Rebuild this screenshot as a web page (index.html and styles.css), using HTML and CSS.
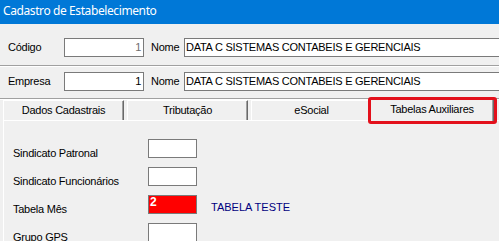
FILE: index.html
```html
<!DOCTYPE html>
<html lang="pt">
<head>
<meta charset="utf-8">
<title>Cadastro de Estabelecimento</title>
<link rel="stylesheet" href="styles.css">
</head>
<body>
<div class="window">
  <div class="titlebar">Cadastro de Estabelecimento</div>
  <div class="header">
    <div class="row">
      <span class="lbl">Código</span>
      <div class="input num disabled">1</div>
      <span class="lbl-nome">Nome</span>
      <div class="input text">DATA C SISTEMAS CONTABEIS E GERENCIAIS</div>
    </div>
    <div class="sep sep-1"></div>
    <div class="row row-2">
      <span class="lbl">Empresa</span>
      <div class="input num">1</div>
      <span class="lbl-nome">Nome</span>
      <div class="input text">DATA C SISTEMAS CONTABEIS E GERENCIAIS</div>
    </div>
    <div class="sep sep-2"></div>
  </div>
  <div class="tabs">
    <div class="tab">Dados Cadastrais</div>
    <div class="tab">Tributação</div>
    <div class="tab">eSocial</div>
    <div class="tab active">Tabelas Auxiliares</div>
    <div class="highlight"></div>
  </div>
  <div class="panel">
    <div class="field">
      <span class="flabel">Sindicato Patronal</span>
      <div class="fbox"></div>
    </div>
    <div class="field">
      <span class="flabel">Sindicato Funcionários</span>
      <div class="fbox"></div>
    </div>
    <div class="field">
      <span class="flabel">Tabela Mês</span>
      <div class="fbox red">2</div>
      <span class="fdesc">TABELA TESTE</span>
    </div>
    <div class="field">
      <span class="flabel">Grupo GPS</span>
      <div class="fbox"></div>
    </div>
  </div>
</div>
</body>
</html>
```
FILE: styles.css
```css
html, body {
  margin: 0;
  padding: 0;
  background: #f0f0f0;
  overflow: hidden;
}
body {
  font-family: "Liberation Sans", Arial, sans-serif;
  font-size: 11px;
  letter-spacing: -0.25px;
  color: #000;
}
.window {
  width: 499px;
  height: 241px;
  overflow: hidden;
  background: #f0f0f0;
}
.titlebar {
  height: 24px;
  line-height: 22px;
  background: #0078d7;
  color: #fff;
  padding-left: 3px;
  font-family: "Noto Sans", "Open Sans", sans-serif;
  font-size: 12px;
  letter-spacing: -0.4px;
}
.header {
  padding-top: 14px;
}
.row {
  display: flex;
  align-items: center;
  height: 19px;
  padding-left: 8px;
}
.row-2 {
  margin-top: 5px;
}
.lbl {
  width: 56px;
  line-height: 13px;
  flex: none;
}
.lbl-nome {
  margin-left: 7px;
  width: 33px;
  line-height: 13px;
  flex: none;
}
.input {
  box-sizing: border-box;
  height: 19px;
  border: 1px solid #7a7a7a;
  background: #fff;
  line-height: 17px;
  white-space: nowrap;
  flex: none;
}
.num {
  width: 80px;
  text-align: right;
  padding-right: 2px;
}
.disabled {
  color: #6d6d6d;
}
.text {
  width: 330px;
  padding-left: 1px;
}
.sep {
  height: 1px;
  background: #a0a0a0;
  border-bottom: 1px solid #fff;
}
.sep-1 {
  margin-top: 8px;
}
.sep-2 {
  margin-top: 7px;
}
.tabs {
  position: relative;
  display: flex;
  height: 20px;
  padding-left: 3px;
}
.tab {
  box-sizing: border-box;
  width: 121px;
  height: 20px;
  margin-right: 3px;
  border-left: 1px solid #fff;
  border-top: 1px solid #fff;
  border-right: 1px solid #696969;
  box-shadow: inset -1px 0 #a0a0a0;
  text-align: center;
  line-height: 18px;
  flex: none;
  white-space: nowrap;
}
.tab.active {
  position: relative;
  z-index: 1;
  width: 124px;
  height: 23px;
  margin-top: -2px;
  margin-left: -5px;
  line-height: 20px;
  background: #f0f0f0;
}
.highlight {
  position: absolute;
  z-index: 2;
  left: 368px;
  top: -3px;
  width: 129px;
  height: 27px;
  box-sizing: border-box;
  border: 3px solid #e3101b;
  border-radius: 3px;
}
.panel {
  margin-left: 3px;
  border-left: 1px solid #fff;
  border-top: 1px solid #fff;
  padding: 18px 0 0 9px;
  height: 200px;
}
.field {
  display: flex;
  align-items: flex-start;
  height: 28px;
}
.flabel {
  width: 135px;
  padding-top: 8px;
  line-height: 13px;
  flex: none;
  white-space: nowrap;
}
.fbox {
  box-sizing: border-box;
  width: 49px;
  height: 19px;
  border: 1px solid #7a7a7a;
  background: #fff;
  flex: none;
}
.fbox.red {
  background: #ff0000;
  color: #fff;
  font-weight: bold;
  font-size: 12px;
  line-height: 13px;
  padding-left: 1px;
}
.fdesc {
  margin-left: 14px;
  padding-top: 6px;
  line-height: 13px;
  color: #000080;
  letter-spacing: 0;
}
```
